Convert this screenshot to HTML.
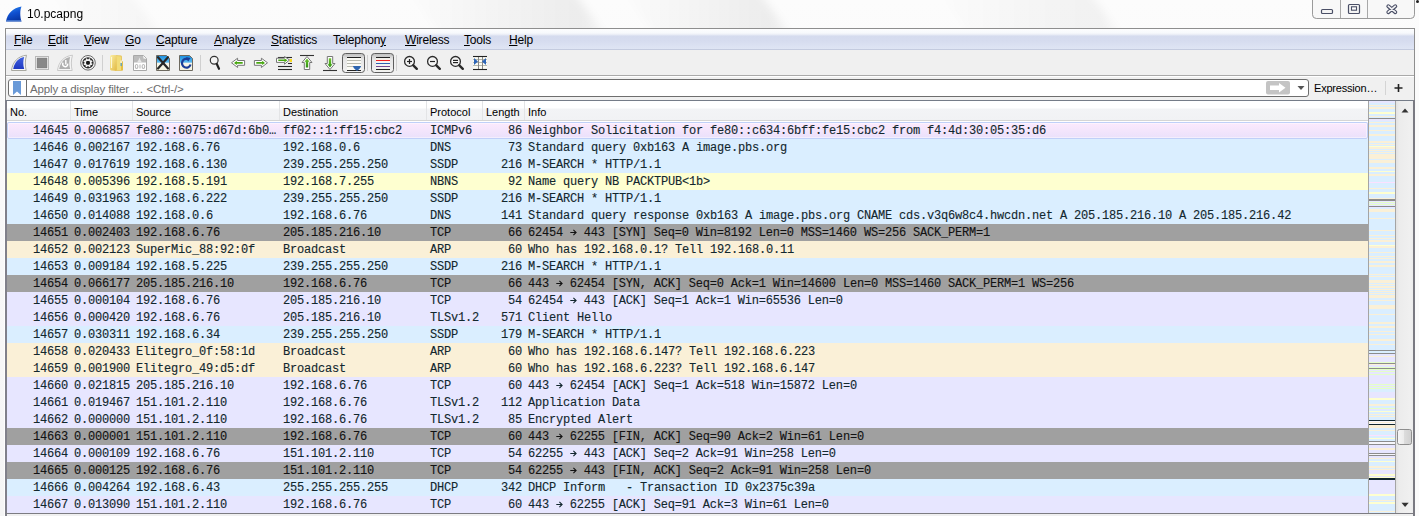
<!DOCTYPE html>
<html><head><meta charset="utf-8">
<style>
*{box-sizing:border-box}
html,body{margin:0;padding:0}
body{width:1419px;height:516px;position:relative;overflow:hidden;background:#f7f7f7;font-family:"Liberation Sans",sans-serif;}
.abs{position:absolute}
#titlebg{position:absolute;left:0;top:0;width:1419px;height:516px;background:linear-gradient(#fcfcfc 0,#f9f9f9 200px,#f5f5f5 516px)}
#ttl{position:absolute;left:27px;top:7px;font-size:12px;color:#000}
#tbtns{position:absolute;left:1312px;top:-1px;width:103px;height:20px;border:1px solid #b4b4b4;border-top:none;border-radius:0 0 5px 5px;background:linear-gradient(#fafafa,#f0f0f0)}
#frame{position:absolute;left:5px;top:28px;width:1410px;height:486px;border:1px solid #8e8e8e;background:#f0f0f0}
#menubar{position:absolute;left:6px;top:29px;width:1408px;height:21px;background:linear-gradient(#fdfdfe 0,#f7f9fc 4px,#e6eaf5 6px,#d5dbee 7px,#d6dcef 12px,#dfe5f4 20px,#c4cbdf 20px,#c4cbdf 21px)}
.mi{position:absolute;top:33px;font-size:12px;letter-spacing:-0.2px;color:#000}
.mi u{text-decoration:underline;text-underline-offset:1px}
#toolbar{position:absolute;left:6px;top:50px;width:1408px;height:26px;background:#f0f0f0;border-bottom:1px solid #a9a9a9}
#filterbar{position:absolute;left:6px;top:76px;width:1408px;height:24px;background:#f0f0f0;border-top:1px solid #fff}
#fbox{position:absolute;left:8px;top:79px;width:1301px;height:18px;border:1px solid #6e6e6e;border-radius:3px;background:#fff}
#fbm{position:absolute;left:26px;top:80px;width:1px;height:16px;background:#6e6e6e}
#fph{position:absolute;left:30px;top:83px;font-size:11.5px;letter-spacing:-0.15px;color:#6d6d6d}
#expr{position:absolute;left:1314px;top:82px;font-size:11px;letter-spacing:-0.2px;color:#000}
#plist{position:absolute;left:5px;top:100px;width:1409px;height:416px;border-top:1px solid #757c88;border-left:2px solid #80808a;background:#fff}
#hdr{position:absolute;left:7px;top:101px;width:1361px;height:20px;background:linear-gradient(#ffffff 0,#ffffff 7px,#f3f4f6 8px,#f1f2f4 19px);border-bottom:1px solid #d5d5d5}
.ht{position:absolute;top:106px;font-size:11px;color:#000}
.hs{position:absolute;top:101px;width:1px;height:19px;background:#e3e4e6}
.r{position:absolute;left:7px;width:1361px;height:17px;font-family:"Liberation Mono",monospace;font-size:12px;letter-spacing:-0.2px;color:#12272e;white-space:pre}
.r span{position:absolute;top:3px;line-height:12px;-webkit-text-stroke:0.12px currentColor}
.ar{display:inline-block;vertical-align:top;margin-top:0px;margin-right:-0.2px}
.no{right:1300px;text-align:right}
.tm{left:67px}
.src{left:129px}
.dst{left:276px}
.pr{left:423px}
.ln{right:846px}
.inf{left:521px}
.udp{background:#daeeff}
.tcp{background:#e7e6ff}
.syn{background:#a0a0a0;color:#121212}
.arp{background:#faf0d7}
.smb{background:#feffd0}
.icmp{background:#fce0ff}
.sel{background:linear-gradient(#fdeafd,#e9e0fb);box-shadow:inset 0 0 0 1px #c0d0f8,inset 0 0 0 2px rgba(255,255,255,0.45);border-radius:2px}

#mm{position:absolute;left:1368px;top:101px;width:28px;height:412px;border-left:1px solid #a4a4a4;border-right:1px solid #a4a4a4;background:#daeeff}
#sb{position:absolute;left:1396px;top:101px;width:17px;height:412px;background:linear-gradient(90deg,#e2e2e2,#ececec 3px,#f0f0f0 14px,#ececec)}
#bot{position:absolute;left:5px;top:513px;width:1410px;height:1px;background:#7c7c82}
#bot2{position:absolute;left:7px;top:514px;width:1406px;height:2px;background:#f0f0f0}
#rfr{position:absolute;left:1413px;top:100px;width:2px;height:416px;background:#7a7a82}
</style></head><body>
<div id="titlebg"></div><svg style="position:absolute;left:0;top:0" width="1419" height="28"><defs><filter id="blr" x="-20%" y="-200%" width="140%" height="500%"><feGaussianBlur stdDeviation="4"/></filter><linearGradient id="sk" x1="0" y1="0" x2="1" y2="0"><stop offset="0" stop-color="#000" stop-opacity="0"/><stop offset="0.75" stop-color="#000" stop-opacity="0.055"/><stop offset="0.85" stop-color="#000" stop-opacity="0.06"/><stop offset="1" stop-color="#000" stop-opacity="0"/></linearGradient></defs><g filter="url(#blr)"><polygon points="400,-20 565,-20 615,48 450,48" fill="url(#sk)"/><polygon points="615,-20 750,-20 800,48 665,48" fill="url(#sk)"/><polygon points="930,-20 1080,-20 1130,48 980,48" fill="url(#sk)" opacity="0.7"/><polygon points="40,-20 120,-20 170,48 90,48" fill="url(#sk)" opacity="0.4"/></g></svg>
<div id="ttl">10.pcapng</div>
<div id="tbtns"></div>
<div id="frame"></div>
<div id="menubar"></div>
<span class="mi" style="left:14px"><u>F</u>ile</span><span class="mi" style="left:48px"><u>E</u>dit</span><span class="mi" style="left:84px"><u>V</u>iew</span><span class="mi" style="left:125px"><u>G</u>o</span><span class="mi" style="left:156px"><u>C</u>apture</span><span class="mi" style="left:214px"><u>A</u>nalyze</span><span class="mi" style="left:271px"><u>S</u>tatistics</span><span class="mi" style="left:333px">Telephon<u>y</u></span><span class="mi" style="left:405px"><u>W</u>ireless</span><span class="mi" style="left:464px"><u>T</u>ools</span><span class="mi" style="left:509px"><u>H</u>elp</span>
<div id="toolbar"></div>
<div id="filterbar"></div>
<div id="fbox"></div>
<div id="fbm"></div>
<div id="fph">Apply a display filter … &lt;Ctrl-/&gt;</div>
<div id="expr">Expression…</div>
<div id="plist"></div>
<div id="hdr"></div>
<div class="hs" style="left:70px"></div><div class="hs" style="left:132px"></div><div class="hs" style="left:279px"></div><div class="hs" style="left:426px"></div><div class="hs" style="left:482px"></div><div class="hs" style="left:524px"></div>
<span class="ht" style="left:10px">No.</span><span class="ht" style="left:74px">Time</span><span class="ht" style="left:136px">Source</span><span class="ht" style="left:283px">Destination</span><span class="ht" style="left:430px">Protocol</span><span class="ht" style="left:486px">Length</span><span class="ht" style="left:528px">Info</span>
<div class="r icmp sel" style="top:122px"><span class="no">14645</span><span class="tm">0.006857</span><span class="src">fe80::6075:d67d:6b0…</span><span class="dst">ff02::1:ff15:cbc2</span><span class="pr">ICMPv6</span><span class="ln">86</span><span class="inf">Neighbor Solicitation for fe80::c634:6bff:fe15:cbc2 from f4:4d:30:05:35:d6</span></div>
<div class="r udp" style="top:139px"><span class="no">14646</span><span class="tm">0.002167</span><span class="src">192.168.6.76</span><span class="dst">192.168.0.6</span><span class="pr">DNS</span><span class="ln">73</span><span class="inf">Standard query 0xb163 A image.pbs.org</span></div>
<div class="r udp" style="top:156px"><span class="no">14647</span><span class="tm">0.017619</span><span class="src">192.168.6.130</span><span class="dst">239.255.255.250</span><span class="pr">SSDP</span><span class="ln">216</span><span class="inf">M-SEARCH * HTTP/1.1</span></div>
<div class="r smb" style="top:173px"><span class="no">14648</span><span class="tm">0.005396</span><span class="src">192.168.5.191</span><span class="dst">192.168.7.255</span><span class="pr">NBNS</span><span class="ln">92</span><span class="inf">Name query NB PACKTPUB&lt;1b&gt;</span></div>
<div class="r udp" style="top:190px"><span class="no">14649</span><span class="tm">0.031963</span><span class="src">192.168.6.222</span><span class="dst">239.255.255.250</span><span class="pr">SSDP</span><span class="ln">216</span><span class="inf">M-SEARCH * HTTP/1.1</span></div>
<div class="r udp" style="top:207px"><span class="no">14650</span><span class="tm">0.014088</span><span class="src">192.168.0.6</span><span class="dst">192.168.6.76</span><span class="pr">DNS</span><span class="ln">141</span><span class="inf">Standard query response 0xb163 A image.pbs.org CNAME cds.v3q6w8c4.hwcdn.net A 205.185.216.10 A 205.185.216.42</span></div>
<div class="r syn" style="top:224px"><span class="no">14651</span><span class="tm">0.002403</span><span class="src">192.168.6.76</span><span class="dst">205.185.216.10</span><span class="pr">TCP</span><span class="ln">66</span><span class="inf">62454 <svg class="ar" width="7" height="9" viewBox="0 0 7 9"><path d="M0.3,5.5H6 M3.4,2.8 L6.1,5.5 L3.4,8.2" stroke="currentColor" stroke-width="1.1" fill="none"/></svg> 443 [SYN] Seq=0 Win=8192 Len=0 MSS=1460 WS=256 SACK_PERM=1</span></div>
<div class="r arp" style="top:241px"><span class="no">14652</span><span class="tm">0.002123</span><span class="src">SuperMic_88:92:0f</span><span class="dst">Broadcast</span><span class="pr">ARP</span><span class="ln">60</span><span class="inf">Who has 192.168.0.1? Tell 192.168.0.11</span></div>
<div class="r udp" style="top:258px"><span class="no">14653</span><span class="tm">0.009184</span><span class="src">192.168.5.225</span><span class="dst">239.255.255.250</span><span class="pr">SSDP</span><span class="ln">216</span><span class="inf">M-SEARCH * HTTP/1.1</span></div>
<div class="r syn" style="top:275px"><span class="no">14654</span><span class="tm">0.066177</span><span class="src">205.185.216.10</span><span class="dst">192.168.6.76</span><span class="pr">TCP</span><span class="ln">66</span><span class="inf">443 <svg class="ar" width="7" height="9" viewBox="0 0 7 9"><path d="M0.3,5.5H6 M3.4,2.8 L6.1,5.5 L3.4,8.2" stroke="currentColor" stroke-width="1.1" fill="none"/></svg> 62454 [SYN, ACK] Seq=0 Ack=1 Win=14600 Len=0 MSS=1460 SACK_PERM=1 WS=256</span></div>
<div class="r tcp" style="top:292px"><span class="no">14655</span><span class="tm">0.000104</span><span class="src">192.168.6.76</span><span class="dst">205.185.216.10</span><span class="pr">TCP</span><span class="ln">54</span><span class="inf">62454 <svg class="ar" width="7" height="9" viewBox="0 0 7 9"><path d="M0.3,5.5H6 M3.4,2.8 L6.1,5.5 L3.4,8.2" stroke="currentColor" stroke-width="1.1" fill="none"/></svg> 443 [ACK] Seq=1 Ack=1 Win=65536 Len=0</span></div>
<div class="r tcp" style="top:309px"><span class="no">14656</span><span class="tm">0.000420</span><span class="src">192.168.6.76</span><span class="dst">205.185.216.10</span><span class="pr">TLSv1.2</span><span class="ln">571</span><span class="inf">Client Hello</span></div>
<div class="r udp" style="top:326px"><span class="no">14657</span><span class="tm">0.030311</span><span class="src">192.168.6.34</span><span class="dst">239.255.255.250</span><span class="pr">SSDP</span><span class="ln">179</span><span class="inf">M-SEARCH * HTTP/1.1</span></div>
<div class="r arp" style="top:343px"><span class="no">14658</span><span class="tm">0.020433</span><span class="src">Elitegro_0f:58:1d</span><span class="dst">Broadcast</span><span class="pr">ARP</span><span class="ln">60</span><span class="inf">Who has 192.168.6.147? Tell 192.168.6.223</span></div>
<div class="r arp" style="top:360px"><span class="no">14659</span><span class="tm">0.001900</span><span class="src">Elitegro_49:d5:df</span><span class="dst">Broadcast</span><span class="pr">ARP</span><span class="ln">60</span><span class="inf">Who has 192.168.6.223? Tell 192.168.6.147</span></div>
<div class="r tcp" style="top:377px"><span class="no">14660</span><span class="tm">0.021815</span><span class="src">205.185.216.10</span><span class="dst">192.168.6.76</span><span class="pr">TCP</span><span class="ln">60</span><span class="inf">443 <svg class="ar" width="7" height="9" viewBox="0 0 7 9"><path d="M0.3,5.5H6 M3.4,2.8 L6.1,5.5 L3.4,8.2" stroke="currentColor" stroke-width="1.1" fill="none"/></svg> 62454 [ACK] Seq=1 Ack=518 Win=15872 Len=0</span></div>
<div class="r tcp" style="top:394px"><span class="no">14661</span><span class="tm">0.019467</span><span class="src">151.101.2.110</span><span class="dst">192.168.6.76</span><span class="pr">TLSv1.2</span><span class="ln">112</span><span class="inf">Application Data</span></div>
<div class="r tcp" style="top:411px"><span class="no">14662</span><span class="tm">0.000000</span><span class="src">151.101.2.110</span><span class="dst">192.168.6.76</span><span class="pr">TLSv1.2</span><span class="ln">85</span><span class="inf">Encrypted Alert</span></div>
<div class="r syn" style="top:428px"><span class="no">14663</span><span class="tm">0.000001</span><span class="src">151.101.2.110</span><span class="dst">192.168.6.76</span><span class="pr">TCP</span><span class="ln">60</span><span class="inf">443 <svg class="ar" width="7" height="9" viewBox="0 0 7 9"><path d="M0.3,5.5H6 M3.4,2.8 L6.1,5.5 L3.4,8.2" stroke="currentColor" stroke-width="1.1" fill="none"/></svg> 62255 [FIN, ACK] Seq=90 Ack=2 Win=61 Len=0</span></div>
<div class="r tcp" style="top:445px"><span class="no">14664</span><span class="tm">0.000109</span><span class="src">192.168.6.76</span><span class="dst">151.101.2.110</span><span class="pr">TCP</span><span class="ln">54</span><span class="inf">62255 <svg class="ar" width="7" height="9" viewBox="0 0 7 9"><path d="M0.3,5.5H6 M3.4,2.8 L6.1,5.5 L3.4,8.2" stroke="currentColor" stroke-width="1.1" fill="none"/></svg> 443 [ACK] Seq=2 Ack=91 Win=258 Len=0</span></div>
<div class="r syn" style="top:462px"><span class="no">14665</span><span class="tm">0.000125</span><span class="src">192.168.6.76</span><span class="dst">151.101.2.110</span><span class="pr">TCP</span><span class="ln">54</span><span class="inf">62255 <svg class="ar" width="7" height="9" viewBox="0 0 7 9"><path d="M0.3,5.5H6 M3.4,2.8 L6.1,5.5 L3.4,8.2" stroke="currentColor" stroke-width="1.1" fill="none"/></svg> 443 [FIN, ACK] Seq=2 Ack=91 Win=258 Len=0</span></div>
<div class="r udp" style="top:479px"><span class="no">14666</span><span class="tm">0.004264</span><span class="src">192.168.6.43</span><span class="dst">255.255.255.255</span><span class="pr">DHCP</span><span class="ln">342</span><span class="inf">DHCP Inform   - Transaction ID 0x2375c39a</span></div>
<div class="r tcp" style="top:496px"><span class="no">14667</span><span class="tm">0.013090</span><span class="src">151.101.2.110</span><span class="dst">192.168.6.76</span><span class="pr">TCP</span><span class="ln">60</span><span class="inf">443 <svg class="ar" width="7" height="9" viewBox="0 0 7 9"><path d="M0.3,5.5H6 M3.4,2.8 L6.1,5.5 L3.4,8.2" stroke="currentColor" stroke-width="1.1" fill="none"/></svg> 62255 [ACK] Seq=91 Ack=3 Win=61 Len=0</span></div>
<div id="mm"></div><svg width="26" height="412" style="position:absolute;left:1369px;top:101px"><rect x="0" y="0" width="26" height="2" fill="#e7e6ff"/><rect x="0" y="2" width="26" height="2" fill="#daeeff"/><rect x="0" y="4" width="26" height="1" fill="#faf0d7"/><rect x="0" y="5" width="26" height="1" fill="#daeeff"/><rect x="0" y="6" width="26" height="2" fill="#faf0d7"/><rect x="0" y="8" width="26" height="3" fill="#daeeff"/><rect x="0" y="11" width="26" height="2" fill="#feffd0"/><rect x="0" y="13" width="26" height="2" fill="#daeeff"/><rect x="0" y="15" width="26" height="1" fill="#faf0d7"/><rect x="0" y="16" width="26" height="1" fill="#daeeff"/><rect x="0" y="17" width="26" height="1" fill="#8c8c8c"/><rect x="0" y="18" width="26" height="2" fill="#e7e6ff"/><rect x="0" y="20" width="26" height="1" fill="#daeeff"/><rect x="0" y="21" width="26" height="1" fill="#faf0d7"/><rect x="0" y="22" width="26" height="2" fill="#daeeff"/><rect x="0" y="24" width="26" height="2" fill="#faf0d7"/><rect x="0" y="26" width="26" height="3" fill="#daeeff"/><rect x="0" y="29" width="26" height="1" fill="#faf0d7"/><rect x="0" y="30" width="26" height="3" fill="#daeeff"/><rect x="0" y="33" width="26" height="2" fill="#faf0d7"/><rect x="0" y="35" width="26" height="5" fill="#daeeff"/><rect x="0" y="40" width="26" height="2" fill="#faf0d7"/><rect x="0" y="42" width="26" height="1" fill="#daeeff"/><rect x="0" y="43" width="26" height="1" fill="#faf0d7"/><rect x="0" y="44" width="26" height="1" fill="#daeeff"/><rect x="0" y="45" width="26" height="1" fill="#feffd0"/><rect x="0" y="46" width="26" height="2" fill="#faf0d7"/><rect x="0" y="48" width="26" height="1" fill="#daeeff"/><rect x="0" y="49" width="26" height="1" fill="#faf0d7"/><rect x="0" y="50" width="26" height="1" fill="#daeeff"/><rect x="0" y="51" width="26" height="1" fill="#faf0d7"/><rect x="0" y="52" width="26" height="1" fill="#daeeff"/><rect x="0" y="53" width="26" height="5" fill="#faf0d7"/><rect x="0" y="58" width="26" height="1" fill="#daeeff"/><rect x="0" y="59" width="26" height="3" fill="#faf0d7"/><rect x="0" y="62" width="26" height="4" fill="#daeeff"/><rect x="0" y="66" width="26" height="2" fill="#faf0d7"/><rect x="0" y="68" width="26" height="2" fill="#daeeff"/><rect x="0" y="70" width="26" height="1" fill="#feffd0"/><rect x="0" y="71" width="26" height="2" fill="#daeeff"/><rect x="0" y="73" width="26" height="2" fill="#faf0d7"/><rect x="0" y="75" width="26" height="6" fill="#daeeff"/><rect x="0" y="81" width="26" height="1" fill="#fce0ff"/><rect x="0" y="82" width="26" height="5" fill="#daeeff"/><rect x="0" y="87" width="26" height="1" fill="#faf0d7"/><rect x="0" y="88" width="26" height="3" fill="#daeeff"/><rect x="0" y="91" width="26" height="2" fill="#feffd0"/><rect x="0" y="93" width="26" height="4" fill="#daeeff"/><rect x="0" y="97" width="26" height="1" fill="#faf0d7"/><rect x="0" y="98" width="26" height="2" fill="#8c8c8c"/><rect x="0" y="100" width="26" height="1" fill="#e7e6ff"/><rect x="0" y="101" width="26" height="1" fill="#e4ffc7"/><rect x="0" y="102" width="26" height="1" fill="#e7e6ff"/><rect x="0" y="103" width="26" height="1" fill="#e4ffc7"/><rect x="0" y="104" width="26" height="1" fill="#e7e6ff"/><rect x="0" y="105" width="26" height="1" fill="#8c8c8c"/><rect x="0" y="106" width="26" height="1" fill="#e7e6ff"/><rect x="0" y="107" width="26" height="1" fill="#daeeff"/><rect x="0" y="108" width="26" height="3" fill="#faf0d7"/><rect x="0" y="111" width="26" height="6" fill="#daeeff"/><rect x="0" y="117" width="26" height="1" fill="#faf0d7"/><rect x="0" y="118" width="26" height="11" fill="#daeeff"/><rect x="0" y="129" width="26" height="1" fill="#faf0d7"/><rect x="0" y="130" width="26" height="4" fill="#daeeff"/><rect x="0" y="134" width="26" height="1" fill="#faf0d7"/><rect x="0" y="135" width="26" height="2" fill="#daeeff"/><rect x="0" y="137" width="26" height="1" fill="#faf0d7"/><rect x="0" y="138" width="26" height="1" fill="#daeeff"/><rect x="0" y="139" width="26" height="2" fill="#faf0d7"/><rect x="0" y="141" width="26" height="3" fill="#daeeff"/><rect x="0" y="144" width="26" height="1" fill="#feffd0"/><rect x="0" y="145" width="26" height="2" fill="#faf0d7"/><rect x="0" y="147" width="26" height="4" fill="#daeeff"/><rect x="0" y="151" width="26" height="1" fill="#faf0d7"/><rect x="0" y="152" width="26" height="3" fill="#daeeff"/><rect x="0" y="155" width="26" height="1" fill="#faf0d7"/><rect x="0" y="156" width="26" height="1" fill="#daeeff"/><rect x="0" y="157" width="26" height="1" fill="#faf0d7"/><rect x="0" y="158" width="26" height="2" fill="#daeeff"/><rect x="0" y="160" width="26" height="2" fill="#faf0d7"/><rect x="0" y="162" width="26" height="2" fill="#daeeff"/><rect x="0" y="164" width="26" height="2" fill="#faf0d7"/><rect x="0" y="166" width="26" height="7" fill="#daeeff"/><rect x="0" y="173" width="26" height="1" fill="#faf0d7"/><rect x="0" y="174" width="26" height="1" fill="#daeeff"/><rect x="0" y="175" width="26" height="1" fill="#faf0d7"/><rect x="0" y="176" width="26" height="3" fill="#daeeff"/><rect x="0" y="179" width="26" height="3" fill="#faf0d7"/><rect x="0" y="182" width="26" height="1" fill="#daeeff"/><rect x="0" y="183" width="26" height="1" fill="#faf0d7"/><rect x="0" y="184" width="26" height="1" fill="#daeeff"/><rect x="0" y="185" width="26" height="2" fill="#faf0d7"/><rect x="0" y="187" width="26" height="1" fill="#daeeff"/><rect x="0" y="188" width="26" height="1" fill="#faf0d7"/><rect x="0" y="189" width="26" height="1" fill="#daeeff"/><rect x="0" y="190" width="26" height="1" fill="#faf0d7"/><rect x="0" y="191" width="26" height="1" fill="#daeeff"/><rect x="0" y="192" width="26" height="1" fill="#faf0d7"/><rect x="0" y="193" width="26" height="1" fill="#daeeff"/><rect x="0" y="194" width="26" height="3" fill="#faf0d7"/><rect x="0" y="197" width="26" height="2" fill="#daeeff"/><rect x="0" y="199" width="26" height="1" fill="#faf0d7"/><rect x="0" y="200" width="26" height="4" fill="#daeeff"/><rect x="0" y="204" width="26" height="4" fill="#faf0d7"/><rect x="0" y="208" width="26" height="5" fill="#daeeff"/><rect x="0" y="213" width="26" height="1" fill="#faf0d7"/><rect x="0" y="214" width="26" height="7" fill="#daeeff"/><rect x="0" y="221" width="26" height="2" fill="#faf0d7"/><rect x="0" y="223" width="26" height="2" fill="#daeeff"/><rect x="0" y="225" width="26" height="2" fill="#faf0d7"/><rect x="0" y="227" width="26" height="3" fill="#daeeff"/><rect x="0" y="230" width="26" height="1" fill="#faf0d7"/><rect x="0" y="231" width="26" height="2" fill="#daeeff"/><rect x="0" y="233" width="26" height="1" fill="#faf0d7"/><rect x="0" y="234" width="26" height="4" fill="#daeeff"/><rect x="0" y="238" width="26" height="2" fill="#faf0d7"/><rect x="0" y="240" width="26" height="3" fill="#daeeff"/><rect x="0" y="243" width="26" height="1" fill="#faf0d7"/><rect x="0" y="244" width="26" height="5" fill="#daeeff"/><rect x="0" y="249" width="26" height="1" fill="#8c8c8c"/><rect x="0" y="250" width="26" height="2" fill="#daeeff"/><rect x="0" y="252" width="26" height="1" fill="#8c8c8c"/><rect x="0" y="253" width="26" height="2" fill="#e7e6ff"/><rect x="0" y="255" width="26" height="1" fill="#faf0d7"/><rect x="0" y="256" width="26" height="5" fill="#e7e6ff"/><rect x="0" y="261" width="26" height="1" fill="#e4ffc7"/><rect x="0" y="262" width="26" height="1" fill="#8c8c8c"/><rect x="0" y="263" width="26" height="1" fill="#faf0d7"/><rect x="0" y="264" width="26" height="2" fill="#e7e6ff"/><rect x="0" y="266" width="26" height="1" fill="#e4ffc7"/><rect x="0" y="267" width="26" height="1" fill="#8c8c8c"/><rect x="0" y="268" width="26" height="1" fill="#e4ffc7"/><rect x="0" y="269" width="26" height="1" fill="#e7e6ff"/><rect x="0" y="270" width="26" height="1" fill="#e4ffc7"/><rect x="0" y="271" width="26" height="2" fill="#e7e6ff"/><rect x="0" y="273" width="26" height="1" fill="#e4ffc7"/><rect x="0" y="274" width="26" height="9" fill="#e7e6ff"/><rect x="0" y="283" width="26" height="1" fill="#e4ffc7"/><rect x="0" y="284" width="26" height="1" fill="#e7e6ff"/><rect x="0" y="285" width="26" height="1" fill="#e4ffc7"/><rect x="0" y="286" width="26" height="1" fill="#e7e6ff"/><rect x="0" y="287" width="26" height="1" fill="#e4ffc7"/><rect x="0" y="288" width="26" height="3" fill="#daeeff"/><rect x="0" y="291" width="26" height="6" fill="#e7e6ff"/><rect x="0" y="297" width="26" height="2" fill="#feffd0"/><rect x="0" y="299" width="26" height="4" fill="#daeeff"/><rect x="0" y="303" width="26" height="2" fill="#faf0d7"/><rect x="0" y="305" width="26" height="2" fill="#daeeff"/><rect x="0" y="307" width="26" height="1" fill="#e4ffc7"/><rect x="0" y="308" width="26" height="1" fill="#e7e6ff"/><rect x="0" y="309" width="26" height="1" fill="#daeeff"/><rect x="0" y="310" width="26" height="1" fill="#feffd0"/><rect x="0" y="311" width="26" height="2" fill="#daeeff"/><rect x="0" y="313" width="26" height="1" fill="#faf0d7"/><rect x="0" y="314" width="26" height="1" fill="#daeeff"/><rect x="0" y="315" width="26" height="1" fill="#faf0d7"/><rect x="0" y="316" width="26" height="3" fill="#daeeff"/><rect x="0" y="319" width="26" height="1" fill="#12272e"/><rect x="0" y="320" width="26" height="1" fill="#f6f6fb"/><rect x="0" y="321" width="26" height="1" fill="#faf0d7"/><rect x="0" y="322" width="26" height="1" fill="#f6f6fb"/><rect x="0" y="323" width="26" height="1" fill="#12272e"/><rect x="0" y="324" width="26" height="3" fill="#faf0d7"/><rect x="0" y="327" width="26" height="2" fill="#daeeff"/><rect x="0" y="329" width="26" height="1" fill="#faf0d7"/><rect x="0" y="330" width="26" height="4" fill="#daeeff"/><rect x="0" y="334" width="26" height="1" fill="#fce0ff"/><rect x="0" y="335" width="26" height="2" fill="#daeeff"/><rect x="0" y="337" width="26" height="1" fill="#feffd0"/><rect x="0" y="338" width="26" height="2" fill="#daeeff"/><rect x="0" y="340" width="26" height="1" fill="#8c8c8c"/><rect x="0" y="341" width="26" height="2" fill="#f6f6fb"/><rect x="0" y="343" width="26" height="1" fill="#8c8c8c"/><rect x="0" y="344" width="26" height="3" fill="#e7e6ff"/><rect x="0" y="347" width="26" height="2" fill="#faf0d7"/><rect x="0" y="349" width="26" height="3" fill="#e7e6ff"/><rect x="0" y="352" width="26" height="1" fill="#8c8c8c"/><rect x="0" y="353" width="26" height="1" fill="#f6f6fb"/><rect x="0" y="354" width="26" height="1" fill="#8c8c8c"/><rect x="0" y="355" width="26" height="2" fill="#e7e6ff"/><rect x="0" y="357" width="26" height="1" fill="#faf0d7"/><rect x="0" y="358" width="26" height="2" fill="#daeeff"/><rect x="0" y="360" width="26" height="1" fill="#feffd0"/><rect x="0" y="361" width="26" height="4" fill="#daeeff"/><rect x="0" y="365" width="26" height="2" fill="#faf0d7"/><rect x="0" y="367" width="26" height="1" fill="#daeeff"/><rect x="0" y="368" width="26" height="1" fill="#faf0d7"/><rect x="0" y="369" width="26" height="4" fill="#e7e6ff"/><rect x="0" y="373" width="26" height="2" fill="#feffd0"/><rect x="0" y="375" width="26" height="1" fill="#e7e6ff"/><rect x="0" y="376" width="26" height="1" fill="#feffd0"/><rect x="0" y="377" width="26" height="2" fill="#12272e"/><rect x="0" y="379" width="26" height="14" fill="#e7e6ff"/><rect x="0" y="393" width="26" height="2" fill="#feffd0"/><rect x="0" y="395" width="26" height="4" fill="#daeeff"/><rect x="0" y="399" width="26" height="1" fill="#faf0d7"/><rect x="0" y="400" width="26" height="1" fill="#daeeff"/><rect x="0" y="401" width="26" height="2" fill="#feffd0"/><rect x="0" y="403" width="26" height="7" fill="#daeeff"/><rect x="0" y="410" width="26" height="1" fill="#faf0d7"/><rect x="0" y="411" width="26" height="1" fill="#daeeff"/></svg>
<div id="sb"></div>
<div id="bot"></div><div id="bot2"></div>
<div id="rfr"></div><div style="position:absolute;left:4px;top:28px;width:1px;height:488px;background:#fefefe"></div><div style="position:absolute;left:1415px;top:28px;width:4px;height:488px;background:#fbfbfb"></div>
<svg width="1419" height="516" viewBox="0 0 1419 516" style="position:absolute;left:0;top:0">
<defs>
<linearGradient id="gfin" x1="0" y1="0" x2="0.3" y2="1"><stop offset="0" stop-color="#2a8af0"/><stop offset="0.55" stop-color="#1050d0"/><stop offset="1" stop-color="#0838a8"/></linearGradient>
<linearGradient id="gfin2" x1="0" y1="0" x2="0" y2="1"><stop offset="0" stop-color="#4060e0"/><stop offset="1" stop-color="#1e38c0"/></linearGradient>
<linearGradient id="gfold" x1="0" y1="0" x2="1" y2="1"><stop offset="0" stop-color="#fbf0a8"/><stop offset="1" stop-color="#e2b840"/></linearGradient>
<linearGradient id="gdoc" x1="0" y1="0" x2="0" y2="1"><stop offset="0" stop-color="#1a8ee0"/><stop offset="0.45" stop-color="#58b8f0"/><stop offset="0.5" stop-color="#f6f6ea"/><stop offset="1" stop-color="#f4f4e0"/></linearGradient>
<linearGradient id="gbtn" x1="0" y1="0" x2="0" y2="1"><stop offset="0" stop-color="#bdbdbd"/><stop offset="0.3" stop-color="#e6e6e6"/><stop offset="1" stop-color="#f2f2f2"/></linearGradient>
<linearGradient id="ggreen" x1="0" y1="0" x2="0" y2="1"><stop offset="0" stop-color="#70c830"/><stop offset="1" stop-color="#2e9010"/></linearGradient>
</defs>
<!-- title fin -->
<path d="M6,21.5 C7.5,13 13,8 21.5,6.5 C20,10 19.8,16 21.5,21.5 Z" fill="url(#gfin)"/>
<path d="M6.5,20 L21,20 L21.5,21.5 L6,21.5 Z" fill="#5a8ad8" opacity="0.7"/>
<!-- title buttons -->
<path d="M1312.5,0 L1312.5,14.5 Q1312.5,18.5 1316.5,18.5 L1410.5,18.5 Q1414.5,18.5 1414.5,14.5 L1414.5,0" fill="#f8f8f8" stroke="#9a9a9a" stroke-width="1"/>
<line x1="1340.5" y1="0" x2="1340.5" y2="18" stroke="#a8a8a8"/>
<line x1="1367.5" y1="0" x2="1367.5" y2="18" stroke="#a8a8a8"/>
<rect x="1321.5" y="9.5" width="11" height="4" rx="1" fill="#f4f4f4" stroke="#4a4f66" stroke-width="1.2"/>
<rect x="1348.5" y="4.5" width="11" height="9" rx="1" fill="#f4f4f4" stroke="#4a4f66" stroke-width="1.2"/>
<rect x="1351.5" y="6.8" width="5" height="3.4" fill="#fff" stroke="#4a4f66" stroke-width="1.1"/>
<path d="M1388.3,6.2 L1395.3,12.2 M1395.3,6.2 L1388.3,12.2" stroke="#4a4f66" stroke-width="3.9" stroke-linecap="round"/><path d="M1388.3,6.2 L1395.3,12.2 M1395.3,6.2 L1388.3,12.2" stroke="#f2f2f4" stroke-width="1.7" stroke-linecap="round"/>
<rect x="1416" y="0" width="3" height="3" rx="1.5" fill="#222"/>

<!-- toolbar: start fin -->
<path d="M11.5,70.5 C12.5,62 18,56 26.5,55.2 C25,60 25,66 26.2,70.5 Z" fill="#f6f6f6" stroke="#a8a8a0" stroke-width="1"/>
<path d="M13.2,69 C14.5,62 18.5,58 24.2,56.9 C23,60.5 23,65 24.2,69 Z" fill="url(#gfin2)"/>
<!-- stop -->
<rect x="35.5" y="56.5" width="13" height="13" fill="#fafafa" stroke="#b8b8b8"/>
<rect x="37" y="58" width="10" height="10" fill="#888" stroke="#7a7a7a" stroke-width="0.5"/>
<!-- restart fin (disabled) -->
<path d="M57.5,70.5 C58.5,62 64,56 72.5,55.2 C71,60 71,66 72.2,70.5 Z" fill="#f6f6f6" stroke="#c8c8c8" stroke-width="1"/>
<path d="M59.2,69 C60.5,62 64.5,58 70.2,56.9 C69,60.5 69,65 70.2,69 Z" fill="#b0b0b0"/>
<path d="M63.2,62.6 A2.5,2.5 0 1 0 67.6,63.6" fill="none" stroke="#fff" stroke-width="1.5"/><path d="M65.8,60 L65.8,64.6" stroke="#fff" stroke-width="1.4"/>
<!-- options gear -->
<circle cx="88" cy="62.8" r="7.3" fill="#f8f8f8" stroke="#5a5a5a" stroke-width="0.9"/>
<circle cx="88" cy="62.8" r="5.6" fill="#262626"/>
<g fill="#f2f2f2"><circle cx="88" cy="62.8" r="3.5"/><rect x="87.2" y="58.2" width="1.6" height="2" transform="rotate(22.5 88 62.8)"/><rect x="87.2" y="58.2" width="1.6" height="2" transform="rotate(67.5 88 62.8)"/><rect x="87.2" y="58.2" width="1.6" height="2" transform="rotate(112.5 88 62.8)"/><rect x="87.2" y="58.2" width="1.6" height="2" transform="rotate(157.5 88 62.8)"/><rect x="87.2" y="58.2" width="1.6" height="2" transform="rotate(202.5 88 62.8)"/><rect x="87.2" y="58.2" width="1.6" height="2" transform="rotate(247.5 88 62.8)"/><rect x="87.2" y="58.2" width="1.6" height="2" transform="rotate(292.5 88 62.8)"/><rect x="87.2" y="58.2" width="1.6" height="2" transform="rotate(337.5 88 62.8)"/></g>
<rect x="86.1" y="60.9" width="3.8" height="3.8" rx="1.1" fill="#151515"/>
<line x1="102.5" y1="55" x2="102.5" y2="71" stroke="#d0d0d0"/>
<!-- folder -->
<path d="M115,56.2 Q115,55.2 116.2,55.2 L120.8,55.5 Q121.8,55.6 121.8,56.6 L121.8,61 L123,61.5 L123,70 Q123,70.8 122,70.8 L115,70.8 Z" fill="#e4bf48"/>
<path d="M116,56 L120.5,56.2 Q121,56.3 121,57 L121,70 L116,70 Z" fill="#f2dc78"/>
<path d="M110,56.5 Q110,55 111.5,55 L114.5,55 Q116.8,55 116.8,57 L116.8,69.5 Q116.8,71 114.5,70.8 L111.2,70.5 Q110,70.3 110,69 Z" fill="url(#gfold)"/>
<path d="M111.5,57 L111.5,68" stroke="#fffbe0" stroke-width="1.1" opacity="0.9"/>
<rect x="120.6" y="60.5" width="1.1" height="2.5" fill="#fff"/>
<rect x="120.6" y="63" width="1.1" height="3" fill="#3a9ae0"/>
<!-- save (disabled) -->
<path d="M133.5,55.5 L143.5,55.5 L146.5,58.5 L146.5,70.5 L133.5,70.5 Z" fill="#fff" stroke="#a8a8a8"/>
<path d="M134,56 L143,56 L146,59 L146,62.5 L134,62.5 Z" fill="#bcbcbc"/><path d="M137,62.5 Q139,60 139.5,57.5 Q140,60 142,62.5 Z" fill="#e8e8e8"/>
<path d="M143.5,56 L143.5,58.5 L146,58.5" fill="#fff"/>
<g fill="none" stroke="#b8b8b8" stroke-width="1.1"><ellipse cx="136.6" cy="66.5" rx="1.3" ry="2"/><line x1="140" y1="64.5" x2="140" y2="68.5"/><ellipse cx="143.4" cy="66.5" rx="1.3" ry="2"/></g>
<!-- close -->
<path d="M156.5,55.5 L166.5,55.5 L169.5,58.5 L169.5,70.5 L156.5,70.5 Z" fill="url(#gdoc)" stroke="#6e6a60"/>
<path d="M158,57.2 L168,68.5 M168,57.2 L158,68.5" stroke="#262626" stroke-width="2.2" stroke-linecap="round"/>
<!-- reload -->
<path d="M179.5,55.5 L189.5,55.5 L192.5,58.5 L192.5,70.5 L179.5,70.5 Z" fill="url(#gdoc)" stroke="#6e6a60"/>
<path d="M190.6,64.5 A4.4,4.4 0 1 1 188.8,59.5" fill="none" stroke="#1a3e98" stroke-width="2.2"/>
<path d="M186,57 L190.5,58 L188.2,61.5 Z" fill="#1a3e98"/>
<line x1="200.5" y1="55" x2="200.5" y2="71" stroke="#d0d0d0"/>
<!-- find -->
<circle cx="214.2" cy="60.3" r="3.9" fill="#f4f4f4" stroke="#333" stroke-width="1.2"/>
<line x1="216.8" y1="64" x2="219" y2="68.8" stroke="#222" stroke-width="2.2" stroke-linecap="round"/>
<!-- back -->
<path d="M231.5,62.8 L237.6,58.2 L237.6,60.5 L244.6,60.5 L244.6,65.3 L237.6,65.3 L237.6,67.5 Z" fill="#fff" stroke="#767676" stroke-linejoin="round"/>
<path d="M234,62.9 L236.8,60.8 L236.8,62.1 L242.7,62.1 L242.7,63.7 L236.8,63.7 L236.8,65 Z" fill="#48a810"/>
<!-- forward -->
<path d="M267.5,62.8 L261.4,58.2 L261.4,60.5 L254.4,60.5 L254.4,65.3 L261.4,65.3 L261.4,67.5 Z" fill="#fff" stroke="#767676" stroke-linejoin="round"/>
<path d="M265,62.9 L262.2,60.8 L262.2,62.1 L256.3,62.1 L256.3,63.7 L262.2,63.7 L262.2,65 Z" fill="#48a810"/>
<!-- go to packet -->
<g stroke="#2a2a2a" stroke-width="1.1">
<line x1="278" y1="57.5" x2="292" y2="57.5"/>
<line x1="288" y1="63.5" x2="292" y2="63.5"/>
<line x1="278" y1="66.5" x2="292" y2="66.5"/>
<line x1="278" y1="69.5" x2="292" y2="69.5"/>
</g>
<rect x="289.5" y="59" width="2.5" height="3" fill="#f8d820"/>
<path d="M289.5,60 L284.5,56.5 L284.5,58.2 L276.5,58.2 L276.5,62.4 L284.5,62.4 L284.5,64.2 Z" fill="#fff" stroke="#767676" stroke-linejoin="round"/>
<path d="M287.5,60.2 L284.5,58.4 L284.5,59.5 L278.3,59.5 L278.3,61 L284.5,61 L284.5,62.2 Z" fill="#48a810"/>
<!-- first -->
<line x1="300" y1="55.5" x2="314" y2="55.5" stroke="#333" stroke-width="1.1"/>
<path d="M307,56.5 L312,62.5 L309.7,62.5 L309.7,69.5 L304.3,69.5 L304.3,62.5 L302,62.5 Z" fill="#fff" stroke="#767676" stroke-linejoin="round"/>
<path d="M307,58.5 L309.5,61.8 L308.2,61.8 L308.2,67.5 L305.8,67.5 L305.8,61.8 L304.5,61.8 Z" fill="url(#ggreen)"/>
<!-- last -->
<line x1="323" y1="70.5" x2="337" y2="70.5" stroke="#333" stroke-width="1.1"/>
<path d="M330,69.5 L335,63.5 L332.7,63.5 L332.7,56.5 L327.3,56.5 L327.3,63.5 L325,63.5 Z" fill="#fff" stroke="#767676" stroke-linejoin="round"/>
<path d="M330,67.5 L332.5,64.2 L331.2,64.2 L331.2,58.2 L328.8,58.2 L328.8,64.2 L327.5,64.2 Z" fill="url(#ggreen)"/>
<!-- autoscroll btn -->
<rect x="342.5" y="53.5" width="22" height="19" rx="3" fill="url(#gbtn)" stroke="#5e5e5e" stroke-width="1"/>
<rect x="347" y="57" width="14" height="14" fill="#fbfbf6"/>
<g stroke-width="1">
<line x1="347" y1="57.5" x2="361" y2="57.5" stroke="#222"/>
<line x1="347" y1="60.5" x2="361" y2="60.5" stroke="#b8bab0"/>
<line x1="347" y1="63.5" x2="361" y2="63.5" stroke="#b8bab0"/>
<line x1="347" y1="66.5" x2="361" y2="66.5" stroke="#b8bab0"/>
<line x1="347" y1="70.5" x2="361" y2="70.5" stroke="#222"/>
</g>
<path d="M353,66 L361,66 Q361,68 357,71 Q353,68 353,66 Z" fill="#2e66b0"/>
<line x1="367.5" y1="55" x2="367.5" y2="71" stroke="#d0d0d0"/>
<!-- colorize btn -->
<rect x="371.5" y="53.5" width="22" height="19" rx="3" fill="url(#gbtn)" stroke="#5e5e5e" stroke-width="1"/>
<rect x="376" y="57" width="14" height="14" fill="#fbfbf6"/>
<g stroke-width="1.1">
<line x1="376" y1="57.5" x2="390" y2="57.5" stroke="#222"/>
<line x1="376" y1="60.5" x2="390" y2="60.5" stroke="#f02020"/>
<line x1="376" y1="63.5" x2="390" y2="63.5" stroke="#2e60b0"/>
<line x1="376" y1="66.5" x2="390" y2="66.5" stroke="#704890"/>
<line x1="376" y1="69.5" x2="390" y2="69.5" stroke="#222"/>
</g>
<line x1="396.5" y1="55" x2="396.5" y2="71" stroke="#d0d0d0"/>
<!-- zoom in/out/100 -->
<g fill="#f4f4f4" stroke="#2a2a2a" stroke-width="1.3">
<circle cx="409.5" cy="61.4" r="4.9"/>
<circle cx="432.5" cy="61.4" r="4.9"/>
<circle cx="455.5" cy="61.4" r="4.9"/>
</g>
<g stroke="#2a2a2a" stroke-width="2.4" stroke-linecap="round">
<line x1="413.3" y1="65.3" x2="416.8" y2="68.8"/>
<line x1="436.3" y1="65.3" x2="439.8" y2="68.8"/>
<line x1="459.3" y1="65.3" x2="462.8" y2="68.8"/>
</g>
<g stroke="#222" stroke-width="1.2">
<line x1="407" y1="61.5" x2="412" y2="61.5"/><line x1="409.5" y1="59" x2="409.5" y2="64"/>
<line x1="430" y1="61.5" x2="435" y2="61.5"/>
<line x1="453" y1="60.4" x2="458" y2="60.4"/><line x1="453" y1="62.6" x2="458" y2="62.6"/>
</g>
<!-- resize columns -->
<rect x="473" y="56" width="14" height="14" fill="#fbfbf4"/>
<g stroke="#b8bab0" stroke-width="1"><line x1="473" y1="59.5" x2="487" y2="59.5"/><line x1="473" y1="62.5" x2="487" y2="62.5"/><line x1="473" y1="65.5" x2="487" y2="65.5"/></g>
<g stroke="#888" stroke-width="1"><line x1="478.5" y1="56" x2="478.5" y2="70"/><line x1="482.5" y1="56" x2="482.5" y2="70"/></g>
<g stroke="#222" stroke-width="1.1"><line x1="473" y1="56.5" x2="487" y2="56.5"/><line x1="473" y1="69.5" x2="487" y2="69.5"/></g>
<path d="M474,58 L478,61.5 L474,65 Z" fill="#2e66b8"/>
<path d="M486,58 L482,61.5 L486,65 Z" fill="#2e66b8"/>

<!-- filter bookmark -->
<path d="M13,81 L21,81 L21,95 L17,91.5 L13,95 Z" fill="#6a9ad8"/>
<!-- apply arrow btn -->
<rect x="1266" y="81" width="24" height="13.5" rx="2" fill="#c4c4c4"/>
<path d="M1270,85.5 L1279,85.5 L1279,83 L1285.5,87.8 L1279,92.5 L1279,90 L1270,90 Z" fill="#fff"/>
<path d="M1297.5,86 L1304.5,86 L1301,90 Z" fill="#555"/>
<line x1="1385.5" y1="81" x2="1385.5" y2="95" stroke="#d4d4d4"/>
<path d="M1398.5,84 L1398.5,92 M1394.5,88 L1402.5,88" stroke="#222" stroke-width="1.6"/>
<!-- scrollbar arrows + thumb -->
<path d="M1401.5,112.5 L1408.5,112.5 L1405,108.5 Z" fill="#333"/>
<path d="M1401.5,502.8 L1408.7,502.8 L1405.1,507 Z" fill="#333"/>
<linearGradient id="gthumb" x1="0" y1="0" x2="1" y2="0"><stop offset="0" stop-color="#f6f6f6"/><stop offset="0.45" stop-color="#ececec"/><stop offset="0.5" stop-color="#dcdcdc"/><stop offset="1" stop-color="#d0d0d0"/></linearGradient><rect x="1397.5" y="429.5" width="14" height="15" rx="2" fill="url(#gthumb)" stroke="#8e8e8e"/>
</svg>

</body></html>
